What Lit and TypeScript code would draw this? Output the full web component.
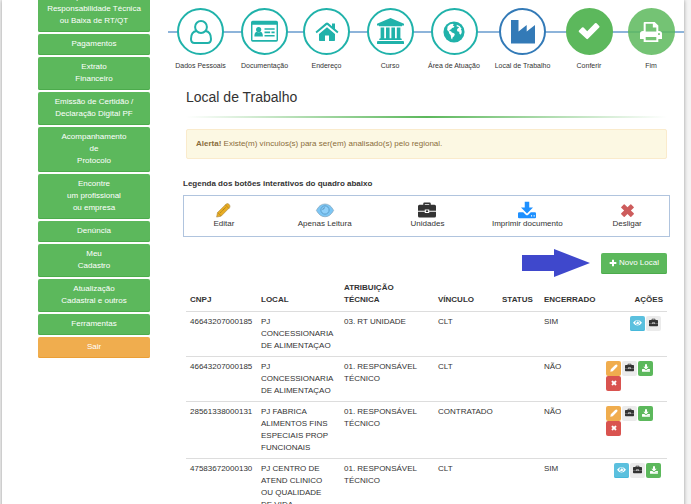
import { LitElement, html, css, svg, TemplateResult } from "lit";
import { customElement, property } from "lit/decorators.js";
import { classMap } from "lit/directives/class-map.js";

const shapes: Record<string, TemplateResult> = {
  user: svg`<g fill="none" stroke="currentColor" stroke-width="2"><circle cx="12" cy="7" r="5.9"/><path d="M7.5 11C3.5 11.5 2 15 2 19c0 2.300 1.500 4 3.500 4h13c2 0 3.500-1.700 3.500-4 0-4-1.500-7.500-5.500-8"/></g>`,
  card: svg`<path fill-rule="evenodd" d="M1.500 2.500h21q1.500 0 1.500 1.500v15.500q0 1.500-1.500 1.500h-21Q0 21 0 19.500V4q0-1.500 1.500-1.500zM1.300 6v13.500h21.400V6z"/><circle cx="6.800" cy="10.200" r="2.300"/><path d="M3 16.500c0-3 1-4.300 2.300-4.300q1.500 1 3 0c1.300 0 2.300 1.300 2.300 4.300zM12 9h9v1.500h-9zM12 12h5v1.500h-5zM18.200 12H21v1.500h-2.800zM12 15h9v1.500h-9z"/>`,
  home: svg`<path d="M12 7.200 20 14v6.200q0 .8-.8.8H14v-5.500h-4V21H4.800q-.8 0-.8-.8V14z"/><path d="M12 2.500q.7 0 1.300.5L17 6.200V3.500h3v5.300l3.500 3-1.200 1.400L12 4.800 1.700 13.200.5 11.800 10.700 3q.6-.5 1.300-.5z"/>`,
  bank: svg`<path d="M12 0 24 5v1.600h-1.600q0 .8-.9.800h-19q-.9 0-.9-.8H0V5zM3.200 8.500h3.200v9.500h1.600V8.500h3.200v9.500h1.600V8.500H16v9.500h1.600V8.500h3.200v9.500q1.200 0 1.200.8v.8H2v-.8q0-.8 1.200-.8zM.8 20.500h22.400q.8 0 .8.800v1.900H0v-1.900q0-.8.8-.8z"/>`,
  globe: svg`<circle cx="12" cy="12" r="11.500"/><path fill="#fff" d="M5 6C7 3.500 9 3 10.500 2.900l1.200.8-1 1.400 1.800.5-.8 1.600-1.900.3-.8 1.400-1.800.9-.1 1.200 1.700.3.800 1.300 1.700.5 1.600 1.200-.8 2.200-1.500 1.300-.7 2.300-1-1.300-.5-3.300-1.600-1.800-.6-2.300-1.700-1.700z"/><path fill="#fff" d="m15 4 3 1.500 2.300 3-.8.700.9 1.500-.1 2.500-1.200 1.800-1.200-1.200-.2-2-1.700-.3-.9-1.800 1.100-1.800 1.400-.6-1-.9-1.700-.5z"/>`,
  industry: svg`<path d="M0 0h7.500v11.500L15.700 5v6.500L24 5v18.500H0z"/>`,
  check: svg`<path d="M2 10.500 5 7.500q.8-.7 1.600 0l3.600 3.700 7.800-7.900q.8-.7 1.600 0l2.600 2.600q.8.8 0 1.600L11 18.800q-.8.700-1.600 0L2 12q-.7-.8 0-1.500z"/>`,
  print: svg`<path fill-rule="evenodd" d="M5 1h11l4 4v6h.8q3.200 0 3.200 3v5.500h-4V23H4v-3.500H0V14q0-3 3.200-3H4V2q0-1 1-1zm1.200 2v8.500h11.600V7H14V3zm0 14.500V21h11.600v-3.500zM20.700 13a1.100 1.100 0 1 0 .01 0z"/>`,
  pencil: svg`<path d="m1 23 1.400-7.200L15.500 2.700q3-3 5.800-.2 2.800 2.800 0 5.600L8.200 21.600z"/>`,
  pencilArt: svg`<path fill="#e9ad23" stroke="#a98a4b" stroke-width="1" d="m1 22.500 1.400-7.200L16 1.800q2.500-2 5 .5t.8 5L8.200 21z"/><path fill="none" stroke="#8a6b22" stroke-width="1.200" stroke-dasharray="2 1" d="m7 15.500 9-9"/><path fill="none" stroke="#a5761a" d="m15 3 6 6M3 15.500l5 5"/>`,
  eye: svg`<path fill-rule="evenodd" d="M0 12.500Q5 5 12 5t12 7.500Q19 20 12 20T0 12.500zM12 6.500a6 6 0 1 0 .01 0z"/><path d="M12 8.500a4 4 0 1 1-4 4q3 0 4-4z"/>`,
  eyeArt: svg`<path fill="#7cc6f5" stroke="#8ba9bd" stroke-width="1" d="M.5 12.500Q5 4 12 4t11.500 8.500Q19 21 12 21T.5 12.500z"/><circle cx="12" cy="12" r="5.500" fill="#8fd0fa" stroke="#5a9dca" stroke-width="1.300"/><path fill="none" stroke="#5590b8" stroke-width="1.200" d="M9 12q0-3 3-3"/>`,
  case: svg`<path fill-rule="evenodd" d="M7 5V3.500Q7 2 8.500 2h7Q17 2 17 3.500V5h5q2 0 2 2v6h-9v-1.800H9V13H0V7q0-2 2-2zm2 0h6V4H9zM0 14.300h9V16h6v-1.700h9V20q0 2-2 2H2q-2 0-2-2z"/><path d="M10.500 12.500h3v2.200h-3z"/>`,
  download: svg`<path d="M9 1h6v7.500h5L12 16.500 4 8.500h5z"/><path fill-rule="evenodd" d="M1.500 15H7l3.300 3.200q1.700 1.500 3.400 0L17 15h5.500q1.500 0 1.500 1.500v5q0 1.500-1.500 1.500h-21Q0 23 0 21.500v-5Q0 15 1.500 15zm15.800 4v1.500h1.500V19zm3.500 0v1.500h1.500V19z"/>`,
  times: svg`<path d="m2 6.200 4-4q.8-.7 1.500 0L12 6.700l4.500-4.500q.7-.7 1.500 0l4 4q.7.700 0 1.500L17.400 12l4.600 4.500q.7.700 0 1.500l-4 4q-.8.700-1.500 0L12 17.400 7.500 22q-.7.700-1.500 0l-4-4q-.7-.8 0-1.500L6.600 12 2 7.700q-.7-.8 0-1.500z"/>`,
  plus: svg`<path d="M9 2h6v7h7v6h-7v7H9v-7H2V9h7z"/>`,
};

@customElement("ui-icon")
export class UiIcon extends LitElement {
  @property() name = "";
  static styles = css`
    :host { display: block; width: 8px; height: 8px; flex: none; }
    svg { display: block; width: 100%; height: 100%; fill: currentColor; overflow: visible; }
  `;
  render() {
    return html`<svg viewBox="0 0 24 24" aria-hidden="true">${shapes[this.name]}</svg>`;
  }
}

const menu: string[][] = [
  ["Requerimento de", "Responsabilidade Técnica", "ou Baixa de RT/QT"],
  ["Pagamentos"],
  ["Extrato", "Financeiro"],
  ["Emissão de Certidão /", "Declaração Digital PF"],
  ["Acompanhamento", "de", "Protocolo"],
  ["Encontre", "um profissional", "ou empresa"],
  ["Denúncia"],
  ["Meu", "Cadastro"],
  ["Atualização", "Cadastral e outros"],
  ["Ferramentas"],
];

const steps = [
  { label: "Dados Pessoais", icon: "user", kind: "done" },
  { label: "Documentação", icon: "card", kind: "done wide" },
  { label: "Endereço", icon: "home", kind: "done" },
  { label: "Curso", icon: "bank", kind: "done wide" },
  { label: "Área de Atuação", icon: "globe", kind: "done small" },
  { label: "Local de Trabalho", icon: "industry", kind: "current" },
  { label: "Conferir", icon: "check", kind: "filled" },
  { label: "Fim", icon: "print", kind: "filled faded small" },
];

const legend = [
  { label: "Editar", icon: "pencilArt", kind: "" },
  { label: "Apenas Leitura", icon: "eyeArt", kind: "large" },
  { label: "Unidades", icon: "case", kind: "large dark" },
  { label: "Imprimir documento", icon: "download", kind: "large blue" },
  { label: "Desligar", icon: "times", kind: "red" },
];

type Action = "view" | "units" | "edit" | "print" | "remove";

const actions: Record<Action, { icon: string; title: string }> = {
  view: { icon: "eye", title: "Apenas Leitura" },
  units: { icon: "case", title: "Unidades" },
  edit: { icon: "pencil", title: "Editar" },
  print: { icon: "download", title: "Imprimir documento" },
  remove: { icon: "times", title: "Desligar" },
};

const rows: { cells: string[]; actions: Action[] }[] = [
  { cells: ["46643207000185", "PJ CONCESSIONARIA DE ALIMENTAÇAO", "03. RT UNIDADE", "CLT", "", "SIM"], actions: ["view", "units"] },
  { cells: ["46643207000185", "PJ CONCESSIONARIA DE ALIMENTAÇAO", "01. RESPONSÁVEL TÉCNICO", "CLT", "", "NÃO"], actions: ["edit", "units", "print", "remove"] },
  { cells: ["28561338000131", "PJ FABRICA ALIMENTOS FINS ESPECIAIS PROP FUNCIONAIS", "01. RESPONSÁVEL TÉCNICO", "CONTRATADO", "", "NÃO"], actions: ["edit", "units", "print", "remove"] },
  { cells: ["47583672000130", "PJ CENTRO DE ATEND CLINICO OU QUALIDADE DE VIDA", "01. RESPONSÁVEL TÉCNICO", "CLT", "", "SIM"], actions: ["view", "units", "print"] },
];

@customElement("app-root")
export class AppRoot extends LitElement {
  static styles = css`
    :host {
      display: block; height: 100vh; overflow: hidden; background: #f4f4f4;
      font-family: "Liberation Sans", Arial, sans-serif; font-size: 8px; line-height: 12px; color: #333;
    }
    * { box-sizing: border-box; }
    button { font: inherit; cursor: pointer; }
    .card {
      display: flex; gap: 18px; min-height: 100vh; margin: 0 7px 0 2px; padding-left: 36px;
      background: #fff; box-shadow: 0 0 4px #999;
    }
    /* The page is scrolled: the first menu entry is partly above the window. */
    .menu { display: flex; flex-direction: column; gap: 2px; width: 112px; flex: none; margin-top: -13px; }
    .btn {
      border: 0; border-radius: 2px; padding: 4px 4px 5px; color: #fff; background: #5cb85c;
      text-align: center; box-shadow: inset 0 -1px 0 #4cab4c;
    }
    .btn.exit { background: #f0ad4e; box-shadow: inset 0 -1px 0 #eb9f35; }
    .line { display: block; }
    main { flex: 1; min-width: 0; }
    .steps {
      position: relative; z-index: 0; display: grid; margin: 8px 0 0; padding: 0; list-style: none;
      grid-template-columns: 65fr 63fr 61fr 66fr 62fr 75fr 58fr 66fr;
    }
    .steps::before { content: ""; position: absolute; z-index: -1; left: 0; right: 0; top: 23px; height: 2px; background: #8db4da; }
    .step { display: flex; flex-direction: column; align-items: center; gap: 6px; font-size: 7px; line-height: 10px; white-space: nowrap; }
    .disc {
      display: flex; align-items: center; justify-content: center; width: 47px; height: 47px;
      border: 2px solid #20b2aa; border-radius: 50%; background: #fff; color: #20b2aa;
    }
    .disc ui-icon { width: 24px; height: 24px; }
    .wide .disc ui-icon { width: 27px; height: 27px; }
    .small .disc ui-icon { width: 22px; height: 22px; }
    .current .disc { border-color: #337ab7; color: #337ab7; }
    .filled .disc { border-color: #5cb85c; background: #5cb85c; color: #fff; }
    .faded .disc { border: 0; background: #5cb85cd9; }
    .content { padding: 0 17px 0 18px; }
    h1 { margin: 17px 0 10px; font-size: 14px; line-height: 18px; font-weight: 400; }
    .rule { height: 2px; margin: 0 0 11px; border: 0; background: linear-gradient(to right, #fff, #5cb85c, #fff); }
    .alert { padding: 8px 9px; border: 1px solid #faebcc; border-radius: 2px; background: #fcf8e3; color: #8a6d3b; }
    .legend { margin: 19px 14px 12px 15px; }
    h2 { margin: 0 0 5px; font-size: 8px; line-height: 12px; }
    .legend-box {
      display: grid; grid-template-columns: 80fr 122fr 84fr 116fr 84fr; margin: 0; padding: 6px 0;
      list-style: none; border: 1px solid #b0c4de;
    }
    .entry { display: flex; flex-direction: column; align-items: center; }
    .entry .slot { display: flex; align-items: center; justify-content: center; height: 16px; }
    .entry ui-icon { width: 15px; height: 15px; }
    .large ui-icon { width: 18px; height: 18px; }
    .dark ui-icon, .units ui-icon { color: #333; }
    .blue ui-icon { color: #1e90ff; }
    .red ui-icon { color: #cd5c5c; }
    .toolbar { display: flex; align-items: center; justify-content: flex-end; gap: 11px; margin-bottom: 1px; }
    .arrow { display: block; width: 68px; height: 28px; fill: #3f48cc; }
    .new { display: flex; align-items: center; gap: 2px; padding: 4px 8px 5px; }
    table { width: 100%; border-collapse: collapse; table-layout: fixed; }
    th, td { padding: 4px; text-align: left; vertical-align: top; }
    th { padding-bottom: 5px; vertical-align: bottom; }
    td { border-top: 1px solid #ddd; }
    td:nth-child(2), td:last-child { padding-right: 6px; }
    .c0 { width: 71px; } .c2 { width: 94px; } .c3 { width: 64px; }
    .c4 { width: 42px; } .c5 { width: 62px; } .c6 { width: 65px; }
    .last { text-align: right; }
    .actions { display: flex; justify-content: flex-end; }
    .group { display: flex; flex-wrap: wrap; column-gap: 1px; }
    .act {
      display: flex; align-items: center; justify-content: center; width: 15px; height: 15px;
      padding: 0 0 2px; border: 0; border-radius: 2px; color: #fff;
    }
    .view { background: #5bc0de; box-shadow: inset 0 -1px 0 #46b8da; }
    .view ui-icon, .units ui-icon { width: 9px; height: 9px; }
    .units { background: #ebebeb; }
    .edit { background: #f0ad4e; }
    .print { background: #5cb85c; }
    .remove { background: #d9534f; }
    .remove ui-icon { width: 6px; height: 6px; }
  `;

  render() {
    const heads = ["CNPJ", "LOCAL", "ATRIBUIÇÃO TÉCNICA", "VÍNCULO", "STATUS", "ENCERRADO", "AÇÕES"];
    return html`
      <div class="card">
        <nav class="menu">
          ${menu.map((m) => html`<button class="btn">${m.map((t) => html`<span class="line">${t}</span>`)}</button>`)}
          <button class="btn exit">Sair</button>
        </nav>
        <main>
          <ol class="steps">
            ${steps.map((s) => html`<li class="step ${s.kind}"><span class="disc"><ui-icon name=${s.icon}></ui-icon></span>${s.label}</li>`)}
          </ol>
          <div class="content">
            <h1>Local de Trabalho</h1>
            <hr class="rule" />
            <div class="alert" role="alert"><strong>Alerta!</strong> Existe(m) vínculos(s) para ser(em) analisado(s) pelo regional.</div>
          </div>
          <section class="legend">
            <h2>Legenda dos botões interativos do quadro abaixo</h2>
            <ul class="legend-box">
              ${legend.map((l) => html`<li class="entry ${l.kind}"><span class="slot"><ui-icon name=${l.icon}></ui-icon></span>${l.label}</li>`)}
            </ul>
          </section>
          <div class="content">
            <div class="toolbar">
              <svg class="arrow" viewBox="0 0 68 28" aria-hidden="true"><path d="M0 6h32V0l36 14-36 14v-6H0z" /></svg>
              <button class="btn new"><ui-icon name="plus"></ui-icon>Novo Local</button>
            </div>
            <table>
              <colgroup>${heads.map((_, i) => html`<col class="c${i}" />`)}</colgroup>
              <thead>
                <tr>${heads.map((h, i) => html`<th class=${classMap({ last: i === 6 })}>${h}</th>`)}</tr>
              </thead>
              <tbody>
                ${rows.map((r) => html`<tr>
                  ${r.cells.map((c) => html`<td>${c}</td>`)}
                  <td><div class="actions"><div class="group">
                    ${r.actions.map((a) => html`<button class="act ${a}" aria-label=${actions[a].title}><ui-icon name=${actions[a].icon}></ui-icon></button>`)}
                  </div></div></td>
                </tr>`)}
              </tbody>
            </table>
          </div>
        </main>
      </div>
    `;
  }
}
